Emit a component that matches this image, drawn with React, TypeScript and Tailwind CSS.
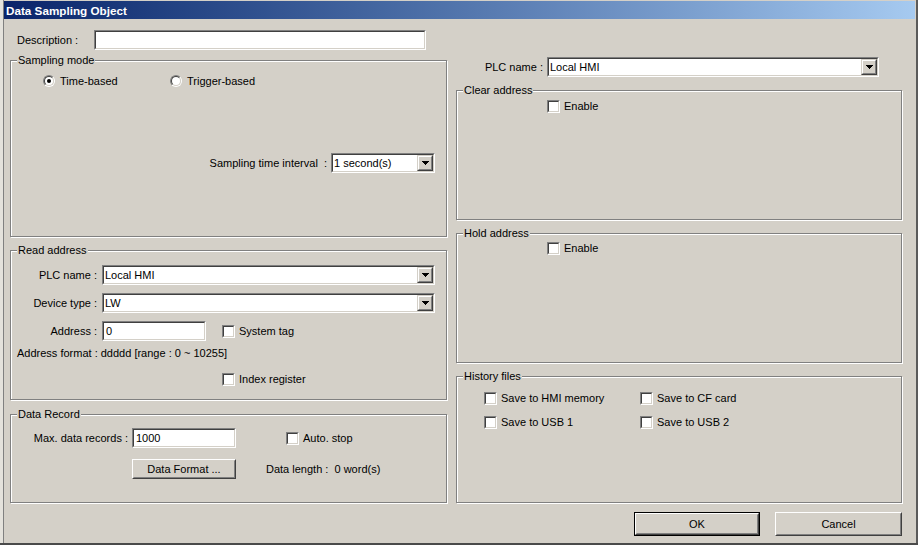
import type { ReactNode } from 'react'

const sunkenOuter = 'border border-t-[#808080] border-l-[#808080] border-b-white border-r-white'
const sunkenInner = 'border border-t-[#404040] border-l-[#404040] border-b-[#d4d0c8] border-r-[#d4d0c8]'

function Arrow() {
    return (
        <div className="h-full w-[16px] shrink-0 border border-t-[#d4d0c8] border-l-[#d4d0c8] border-b-[#404040] border-r-[#404040]">
            <div className="flex h-full w-full items-center justify-center border border-t-white border-l-white border-b-[#808080] border-r-[#808080] bg-[#d4d0c8]">
                <svg width="7" height="4" viewBox="0 0 7 4" shapeRendering="crispEdges">
                    <path d="M0 0h7v1h-1v1h-1v1h-1v1h-1v-1h-1v-1h-1v-1h-1z" fill="#000" />
                </svg>
            </div>
        </div>
    )
}

function Combo({ value, className }: { value: string; className: string }) {
    return (
        <div className={`h-[20px] shrink-0 ${sunkenOuter} ${className}`}>
            <div className={`flex h-full w-full items-center bg-white ${sunkenInner}`}>
                <span className="flex-1 truncate pl-[1px]">{value}</span>
                <Arrow />
            </div>
        </div>
    )
}

function Input({ value, className }: { value?: string; className: string }) {
    return (
        <div className={`h-[20px] shrink-0 ${sunkenOuter} ${className}`}>
            <div className={`flex h-full w-full items-center bg-white pl-[2px] ${sunkenInner}`}>{value}</div>
        </div>
    )
}

function Check() {
    return (
        <div className={`h-[13px] w-[13px] shrink-0 ${sunkenOuter}`}>
            <div className={`h-full w-full bg-white ${sunkenInner}`} />
        </div>
    )
}

function CheckItem({ label, className = '' }: { label: string; className?: string }) {
    return (
        <div className={`flex h-[13px] items-center gap-[4px] ${className}`}>
            <Check />
            <span>{label}</span>
        </div>
    )
}

function Radio({ label, checked, className = '' }: { label: string; checked?: boolean; className?: string }) {
    return (
        <div className={`flex h-[12px] items-center gap-[5px] ${className}`}>
            <div className="h-[12px] w-[12px] shrink-0 rounded-full border border-t-[#808080] border-l-[#808080] border-b-white border-r-white">
                <div className="flex h-full w-full items-center justify-center rounded-full border border-t-[#404040] border-l-[#404040] border-b-[#d4d0c8] border-r-[#d4d0c8] bg-white">
                    {checked && <div className="h-[4px] w-[4px] rounded-full bg-black" />}
                </div>
            </div>
            <span>{label}</span>
        </div>
    )
}

function Button({ label, isDefault, className }: { label: string; isDefault?: boolean; className: string }) {
    const face = (
        <div className="h-full w-full border border-t-white border-l-white border-b-[#404040] border-r-[#404040]">
            <div className="flex h-full w-full items-center justify-center border border-t-[#d4d0c8] border-l-[#d4d0c8] border-b-[#808080] border-r-[#808080]">
                {label}
            </div>
        </div>
    )
    return (
        <div className={`shrink-0 ${isDefault ? 'border border-black' : ''} ${className}`}>{face}</div>
    )
}

function Group({ title, className, children }: { title: string; className: string; children?: ReactNode }) {
    return (
        <div className={`relative shrink-0 border border-[#808080] shadow-[inset_1px_1px_0_#fff,1px_1px_0_#fff] ${className}`}>
            <span className="absolute left-[6px] top-[-7px] bg-[#d4d0c8] px-[1px] leading-[13px]">{title}</span>
            {children}
        </div>
    )
}

export default function App() {
    return (
        <main className="flex h-[545px] w-[918px] overflow-hidden border-b-2 border-b-[#4a4a4a] bg-[#d4d0c8] font-['Liberation_Sans',Arial,sans-serif] text-[11px] leading-[13px] text-black">
            <div className="w-[4px] shrink-0 border-r border-r-[#808080] bg-[#e4e2dc]" />

            <div className="flex flex-1 flex-col">
                <div className="mt-[1px] flex h-[18px] shrink-0 items-center bg-linear-to-r from-[#0a246a] to-[#a6caf0] pl-[2px] text-[11.7px] font-bold text-white">
                    Data Sampling Object
                </div>

                <div className="flex gap-[9px] pl-[6px]">
                    {/* left column */}
                    <div className="flex w-[437px] flex-col">
                        <div className="mt-[11px] flex h-[20px] items-center">
                            <span className="w-[84px] pl-[7px]">Description :</span>
                            <Input className="w-[332px]" />
                        </div>

                        <Group title="Sampling mode" className="mt-[10px] h-[177px] w-[437px]">
                            <div className="flex pl-[32px] pt-[14px]">
                                <Radio label="Time-based" checked className="w-[127px]" />
                                <Radio label="Trigger-based" />
                            </div>
                            <div className="mt-[66px] flex h-[20px] items-center justify-end gap-[4px] pr-[11px]">
                                <span className="whitespace-pre">Sampling time interval  :</span>
                                <Combo value="1 second(s)" className="w-[104px]" />
                            </div>
                        </Group>

                        <Group title="Read address" className="mt-[13px] h-[150px] w-[437px]">
                            <div className="flex flex-col gap-[8px] pt-[14px]">
                                <div className="flex h-[20px] items-center">
                                    <span className="w-[91px] pr-[5px] text-right">PLC name :</span>
                                    <Combo value="Local HMI" className="w-[333px]" />
                                </div>
                                <div className="flex h-[20px] items-center">
                                    <span className="w-[91px] pr-[5px] text-right">Device type :</span>
                                    <Combo value="LW" className="w-[333px]" />
                                </div>
                                <div className="flex h-[20px] items-center">
                                    <span className="w-[91px] pr-[5px] text-right">Address :</span>
                                    <Input value="0" className="w-[104px]" />
                                    <CheckItem label="System tag" className="ml-[16px]" />
                                </div>
                            </div>
                            <div className="mt-[6px] pl-[6px]">Address format : ddddd [range : 0 ~ 10255]</div>
                            <CheckItem label="Index register" className="ml-[211px] mt-[13px]" />
                        </Group>

                        <Group title="Data Record" className="mt-[14px] h-[89px] w-[437px]">
                            <div className="mt-[13px] flex h-[20px] items-center">
                                <span className="w-[121px] pr-[4px] text-right">Max. data records :</span>
                                <Input value="1000" className="w-[104px]" />
                                <CheckItem label="Auto. stop" className="ml-[50px]" />
                            </div>
                            <div className="mt-[11px] flex h-[20px] items-center">
                                <Button label="Data Format ..." className="ml-[121px] h-[20px] w-[104px]" />
                                <span className="ml-[30px] whitespace-pre">Data length :  0 word(s)</span>
                            </div>
                        </Group>
                    </div>

                    {/* right column */}
                    <div className="flex w-[446px] flex-col">
                        <div className="mt-[38px] flex h-[20px] items-center">
                            <span className="w-[91px] pr-[4px] text-right">PLC name :</span>
                            <Combo value="Local HMI" className="w-[332px]" />
                        </div>

                        <Group title="Clear address" className="mt-[13px] h-[130px] w-[446px]">
                            <CheckItem label="Enable" className="ml-[90px] mt-[9px]" />
                        </Group>

                        <Group title="Hold address" className="mt-[13px] h-[130px] w-[446px]">
                            <CheckItem label="Enable" className="ml-[90px] mt-[8px]" />
                        </Group>

                        <Group title="History files" className="mt-[13px] h-[127px] w-[446px]">
                            <div className="grid grid-cols-[156px_1fr] gap-y-[11px] pl-[27px] pt-[15px]">
                                <CheckItem label="Save to HMI memory" />
                                <CheckItem label="Save to CF card" />
                                <CheckItem label="Save to USB 1" />
                                <CheckItem label="Save to USB 2" />
                            </div>
                        </Group>
                    </div>
                </div>

                <div className="mt-[9px] flex justify-end gap-[15px] pr-[13px]">
                    <Button label="OK" isDefault className="h-[24px] w-[126px]" />
                    <Button label="Cancel" className="h-[24px] w-[127px]" />
                </div>
            </div>

            <div className="w-[3px] shrink-0 border-r-2 border-r-[#5a5a5a]" />
        </main>
    )
}
